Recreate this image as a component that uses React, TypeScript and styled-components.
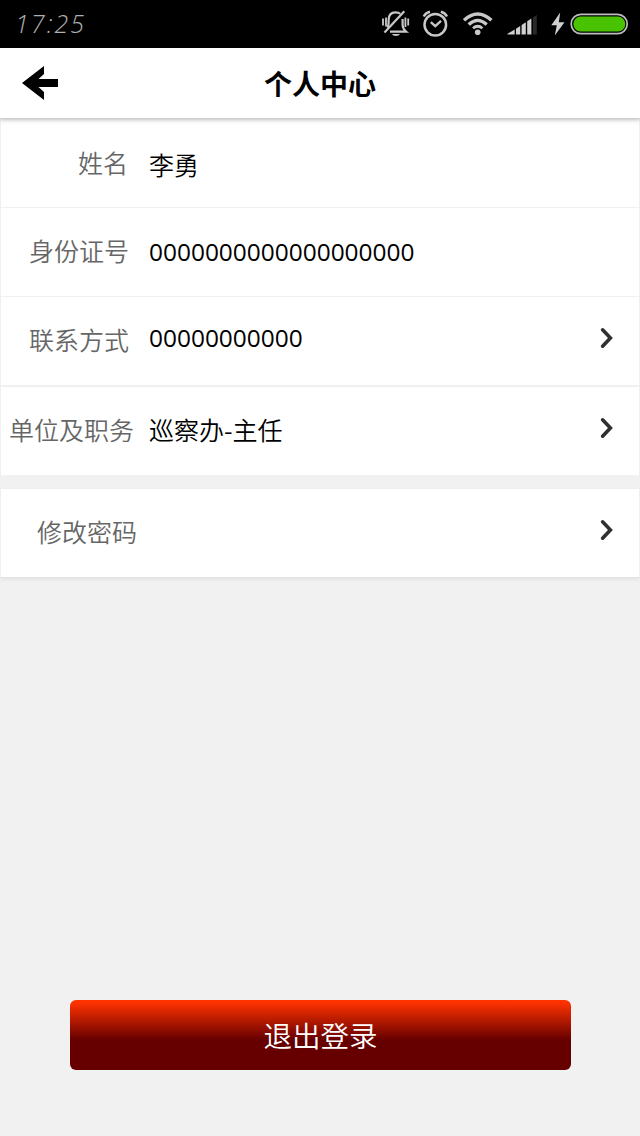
import React from "react";
import styled, { createGlobalStyle } from "styled-components";

const GlobalStyle = createGlobalStyle`
  * { box-sizing: border-box; }
  body {
    margin: 0;
    background: #f1f1f1;
    font-family: "Noto Sans CJK SC", sans-serif;
  }
`;

const Screen = styled.div`
  width: 640px;
  height: 1136px;
  display: flex;
  flex-direction: column;
  background: #f1f1f1;
  overflow: hidden;
`;

const StatusBar = styled.div`
  height: 48px;
  flex: none;
  display: flex;
  justify-content: space-between;
  background: #000;
`;

const Clock = styled.div`
  padding-left: 15px;
  font: italic 300 25px/46px "Open Sans", sans-serif;
  letter-spacing: 2.1px;
  color: #b0b0b0;
`;

const StatusIcons = styled.svg`
  width: 270px;
  height: 48px;
  display: block;
`;

const Header = styled.header`
  height: 70px;
  flex: none;
  display: grid;
  grid-template-columns: 100px 1fr 100px;
  align-items: center;
  background: #fff;
  box-shadow: 0 2px 4px rgba(0, 0, 0, 0.26);
  z-index: 1;
`;

const BackIcon = styled.svg`
  width: 36px;
  height: 34px;
  margin-left: 22px;
`;

const Title = styled.h1`
  margin: 0;
  font-size: 28px;
  line-height: 70px;
  font-weight: 700;
  text-align: center;
  color: #000;
`;

const Group = styled.section<{ $gap?: number; $raised?: boolean }>`
  flex: none;
  margin-top: ${(p) => p.$gap ?? 0}px;
  border: solid #efefef;
  border-width: 0 1px;
  background: #fff;
  box-shadow: ${(p) => (p.$raised ? "0 2px 4px rgba(0, 0, 0, 0.07)" : "none")};
`;

const Row = styled.div<{ $height: number; $line?: number }>`
  height: ${(p) => p.$height}px;
  display: flex;
  align-items: flex-start;
  border-bottom: ${(p) => p.$line ?? 0}px solid #f0f0f0;
`;

const Label = styled.div<{ $indent: number; $top: number }>`
  width: 148px;
  flex: none;
  padding: ${(p) => p.$top}px 0 0 ${(p) => p.$indent}px;
  font-size: 25px;
  line-height: 36px;
  font-weight: 350;
  white-space: nowrap;
  color: #666;
`;

const Value = styled.div<{ $top: number }>`
  flex: 1;
  padding-top: ${(p) => p.$top}px;
  font-size: 25px;
  line-height: 36px;
  font-weight: 350;
  color: #000;
`;

const Digits = styled.span`
  font-family: "Open Sans", sans-serif;
  font-size: 24.45px;
  font-weight: 400;
`;

const Chevron = styled.svg<{ $top: number }>`
  width: 14px;
  height: 22px;
  margin: ${(p) => p.$top}px 25px 0 0;
`;

const Footer = styled.footer`
  margin-top: auto;
  padding: 0 69px 66px 70px;
`;

const LogoutButton = styled.button`
  display: block;
  width: 100%;
  height: 70px;
  padding: 0;
  border: 0;
  border-radius: 6px;
  background: linear-gradient(#ff3300 0%, #fa3100 5%, #660000 57%, #660000 100%);
  font-family: inherit;
  font-size: 28.5px;
  line-height: 70px;
  font-weight: 350;
  color: #fff;
`;

const Next = ({ top }: { top: number }) => (
  <Chevron $top={top} viewBox="0 0 14 22">
    <path d="M2.6 2.8 L10.4 11 L2.6 19.2" fill="none" stroke="#303030" strokeWidth="3.6" strokeLinecap="round" />
  </Chevron>
);

const SystemIcons = () => (
  <StatusIcons viewBox="370 0 270 48">
    <g fill="none" stroke="#c8c8c8" strokeWidth="2.2">
      <path d="M387.3 27.5 Q388.6 26 388.6 23 V20 Q388.6 12.3 395.5 12.3 Q398.5 12.3 400.2 13.8 M402.6 19 V25 Q402.8 29 406 31.6 H390" />
      <path d="M404.3 11.3 L384.5 32.5" />
      <path d="M383 18.5 V25.5 M386 17.5 V26.5 M408.2 18.5 V25.5 M405.4 17.5 V27" strokeWidth="1.8" />
      <circle cx="435.3" cy="24.7" r="10.8" strokeWidth="2.5" />
      <path d="M430.8 22.2 L435.3 26.2 L441 20.8" strokeWidth="2.3" />
      <path d="M423.7 16.5 Q426 12.5 430 11.8 M440.8 11.8 Q445 12.7 447 16.5" strokeWidth="2.5" />
      <path d="M464 20.2 Q477.7 7.8 491.4 20.2" strokeWidth="3.4" />
      <path d="M468.7 24.5 Q477.7 16.2 486.7 24.5" strokeWidth="3.2" />
      <path d="M473 28.2 Q477.7 24.2 482.4 28.2" strokeWidth="2.8" />
    </g>
    <path d="M391.8 34 H400 Q398.8 36 395.9 36 Q393 36 391.8 34 Z" fill="#c8c8c8" />
    <circle cx="477.7" cy="32.2" r="2.8" fill="#c8c8c8" />
    <g fill="#d0d0d0">
      <path d="M507.5 34.5 V33.7 L514.7 29.4 V34.5 Z" />
      <path d="M516 34.5 V28.7 L520.2 26 V34.5 Z" />
      <path d="M521.6 34.5 V25 L525.8 22.2 V34.5 Z" />
      <path d="M527.2 34.5 V21.2 L531.4 18.4 V34.5 Z" />
      <path d="M533 34.5 V17.4 L536.8 14.8 V34.5 Z" fill="#292929" />
      <path d="M560.2 12.5 L551.3 25.3 H556.8 L554.8 35.5 L564.5 22.2 H558.8 Z" />
    </g>
    <rect x="571.2" y="14.3" width="56" height="19.4" rx="9.7" fill="none" stroke="#bdbdbd" strokeWidth="1.7" />
    <rect x="573.3" y="16.6" width="52" height="14.8" rx="7.4" fill="#49c300" />
  </StatusIcons>
);

export default function App() {
  return (
    <>
      <GlobalStyle />
      <Screen>
        <StatusBar>
          <Clock>17:25</Clock>
          <SystemIcons />
        </StatusBar>
        <Header>
          <BackIcon viewBox="0 0 36 34">
            <path d="M0 17 L22 0 V8 L16.5 13 H36 V21 H16.5 L22 26 V34 Z" fill="#000" />
          </BackIcon>
          <Title>个人中心</Title>
        </Header>
        <Group>
          <Row $height={90} $line={1}>
            <Label $indent={77} $top={26}>姓名</Label>
            <Value $top={28}>李勇</Value>
          </Row>
          <Row $height={89} $line={1}>
            <Label $indent={28} $top={24}>身份证号</Label>
            <Value $top={24}><Digits>0000000000000000000</Digits></Value>
          </Row>
          <Row $height={90} $line={2}>
            <Label $indent={28} $top={24}>联系方式</Label>
            <Value $top={21}><Digits>00000000000</Digits></Value>
            <Next top={30} />
          </Row>
          <Row $height={88}>
            <Label $indent={8} $top={24}>单位及职务</Label>
            <Value $top={24}>巡察办-主任</Value>
            <Next top={30} />
          </Row>
        </Group>
        <Group $gap={14} $raised>
          <Row $height={88}>
            <Label $indent={36} $top={24}>修改密码</Label>
            <Value $top={24} />
            <Next top={30} />
          </Row>
        </Group>
        <Footer>
          <LogoutButton type="button">退出登录</LogoutButton>
        </Footer>
      </Screen>
    </>
  );
}
